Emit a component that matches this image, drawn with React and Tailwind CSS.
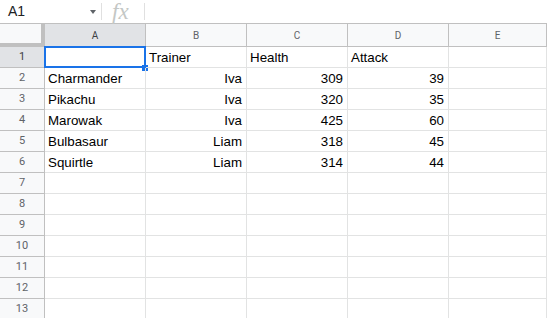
import React from "react";

const columns = ["A", "B", "C", "D", "E"];

const data = [
  ["", "Trainer", "Health", "Attack"],
  ["Charmander", "Iva", 309, 39],
  ["Pikachu", "Iva", 320, 35],
  ["Marowak", "Iva", 425, 60],
  ["Bulbasaur", "Liam", 318, 45],
  ["Squirtle", "Liam", 314, 44],
];

const rowCount = 13;

const Cell = ({ value, selected }) => {
  const isNumber = typeof value === "number";
  const alignRight = isNumber || value === "Iva" || value === "Liam";
  return (
    <div
      className={`relative h-[21px] border-r border-b border-[#e2e3e3] px-[3px] pt-[1px] text-[13.33px] leading-[20px] text-black ${
        alignRight ? "text-right pr-[4px]" : ""
      }`}
    >
      {value}
      {selected && (
        <>
          <div className="absolute -left-px -top-px right-[-1px] bottom-[-1px] border-2 border-[#1a73e8]" />
          <div className="absolute right-[-3px] bottom-[-4px] h-[6px] w-[6px] bg-[#1a73e8]" />
        </>
      )}
    </div>
  );
};

const App = () => {
  const rows = Array.from({ length: rowCount }, (_, i) => data[i] || []);

  return (
    <div
      className="h-[318px] w-[547px] overflow-hidden bg-white"
      style={{ fontFamily: '"Liberation Sans", Arial, sans-serif' }}
    >
      {/* Formula bar */}
      <div className="flex h-[24px] items-center border-b border-[#c0c0c0]">
        <div className="w-[84px] pl-[8px] text-[14px] text-[#202124]">A1</div>
        <div className="flex w-[17px] justify-center">
          <div className="h-0 w-0 border-x-[3.5px] border-t-[4px] border-x-transparent border-t-[#5f6368]" />
        </div>
        <div className="h-[17px] w-px bg-[#e0e0e0]" />
        <div
          className="w-[42px] pl-[10px] text-[23px] italic leading-none text-[#c4c7c5]"
          style={{ fontFamily: '"Liberation Serif", serif' }}
        >
          fx
        </div>
        <div className="h-[17px] w-px bg-[#e0e0e0]" />
      </div>

      {/* Grid */}
      <div className="grid grid-cols-[45px_101px_101px_101px_101px_1fr]">
        {/* Corner */}
        <div className="h-[23px] border-r-4 border-b-4 border-[#c0c0c0] bg-[#f8f9fa]" />
        {columns.map((c) => (
          <div
            key={c}
            className={`flex h-[23px] items-center justify-center border-r border-b border-[#c0c0c0] text-[10px] ${
              c === "A" ? "bg-[#e1e3e6] text-[#3c4043]" : "bg-[#f8f9fa] text-[#5f6368]"
            }`}
            style={{ fontFamily: "Roboto, sans-serif" }}
          >
            {c}
          </div>
        ))}

        {rows.map((row, r) => (
          <React.Fragment key={r}>
            <div
              className={`flex h-[21px] items-center justify-center border-r border-b border-[#c0c0c0] text-[11px] ${
                r === 0 ? "bg-[#e1e3e6] text-[#3c4043]" : "bg-[#f8f9fa] text-[#5f6368]"
              }`}
              style={{ fontFamily: "Roboto, sans-serif" }}
            >
              {r + 1}
            </div>
            {columns.map((c, ci) => (
              <Cell key={c} value={row[ci] ?? ""} selected={r === 0 && ci === 0} />
            ))}
          </React.Fragment>
        ))}
      </div>
    </div>
  );
};

export default App;
